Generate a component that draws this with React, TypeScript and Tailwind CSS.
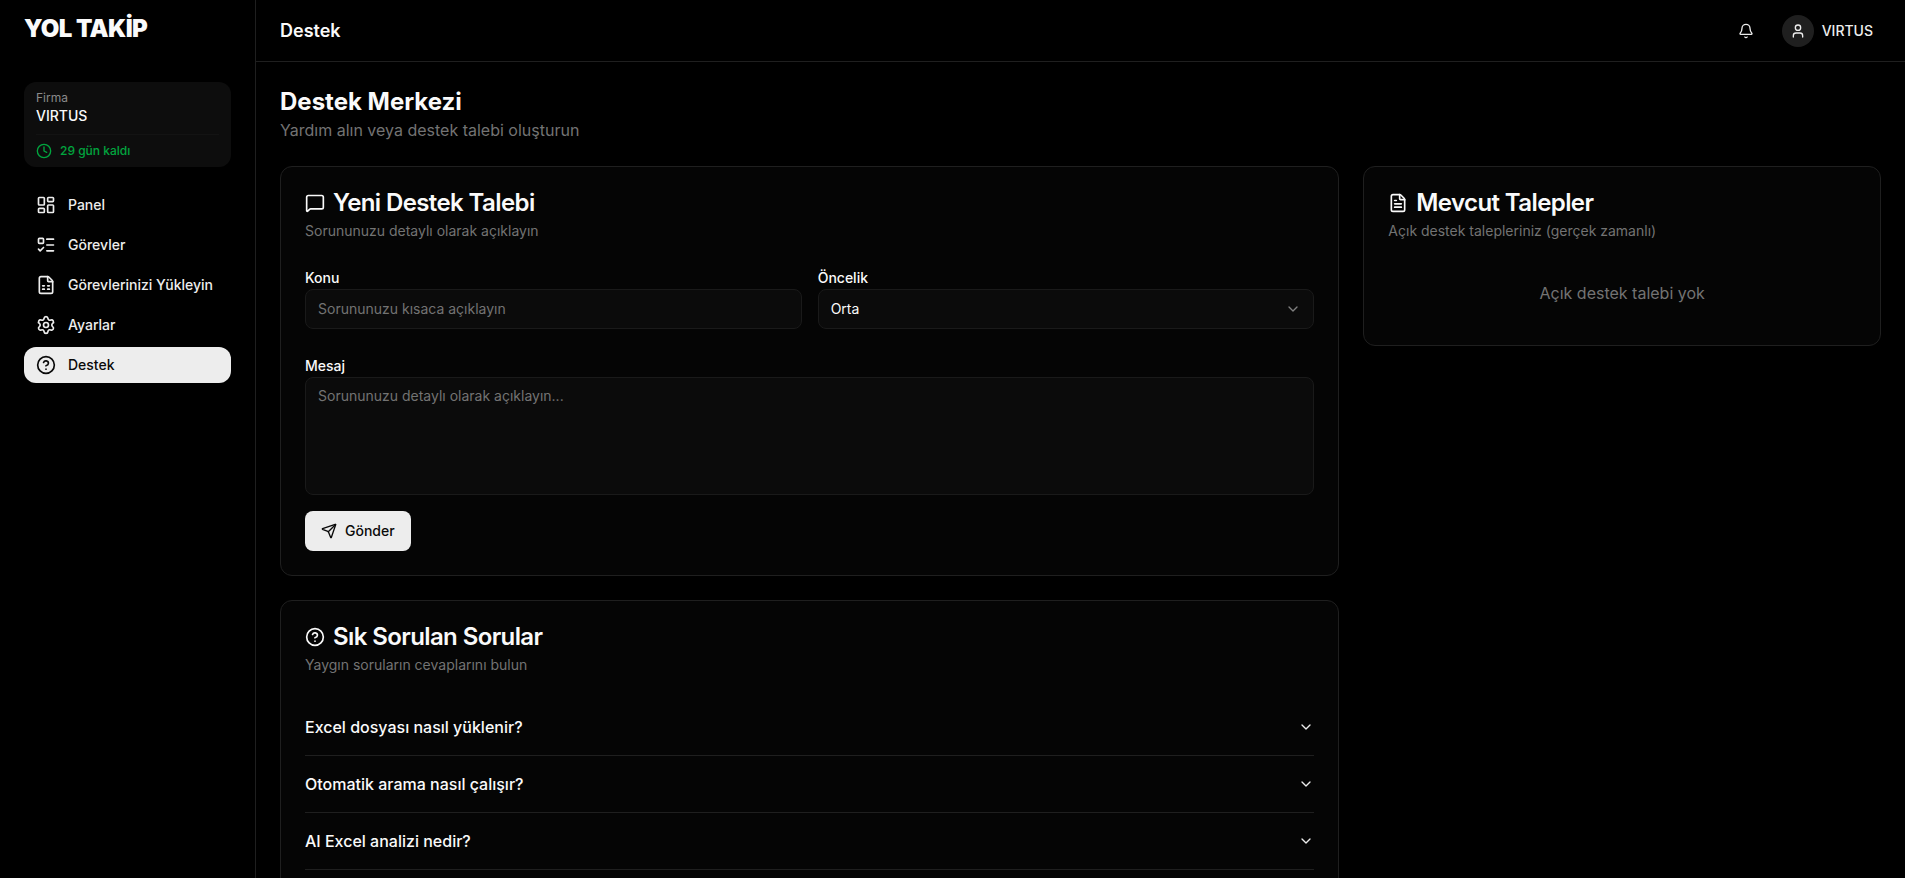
import { Bell, ChevronDown, CircleHelp, Clock, FileSpreadsheet, FileText, LayoutDashboard, ListTodo, MessageSquare, Send, Settings, User } from "lucide-react";

const navItems = [
  { label: "Panel", icon: LayoutDashboard },
  { label: "Görevler", icon: ListTodo },
  { label: "Görevlerinizi Yükleyin", icon: FileSpreadsheet },
  { label: "Ayarlar", icon: Settings },
  { label: "Destek", icon: CircleHelp, active: true },
];

const faqs = ["Excel dosyası nasıl yüklenir?", "Otomatik arama nasıl çalışır?", "AI Excel analizi nedir?"];

const Sidebar = () => {
  return (
    <aside className="flex h-full w-[256px] shrink-0 flex-col border-r border-[#1f1f1f] bg-black">
      {/* logo */}
      <div className="h-[62px] px-6 pt-[13px]">
        <span className="text-[24px] leading-8 font-black tracking-tight text-[#fafafa]">YOL TAKİP</span>
      </div>

      {/* firma */}
      <div className="mx-6 mt-5 rounded-xl bg-[#0d0d0d] px-3 pt-2 pb-2">
        <p className="text-xs leading-4 text-[#8a8a8a]">Firma</p>
        <p className="text-sm leading-5 font-medium text-[#fafafa]">VIRTUS</p>
        <div className="mt-2 flex items-center gap-2 border-t border-[#131313] pt-2">
          <Clock className="h-4 w-4 text-green-600" />
          <span className="text-xs leading-4 font-medium text-green-600">29 gün kaldı</span>
        </div>
      </div>

      {/* nav */}
      <nav className="mx-6 mt-5 flex flex-col gap-1">
        {navItems.map((item) => (
          <div
            key={item.label}
            className={`flex h-9 items-center gap-3 rounded-xl px-3 text-sm font-medium ${item.active ? "bg-[#ededed] text-[#0a0a0a]" : "text-[#ededed]"}`}
          >
            <item.icon className="h-5 w-5" />
            <span>{item.label}</span>
          </div>
        ))}
      </nav>
    </aside>
  );
};

const Header = () => {
  return (
    <header className="flex h-[62px] shrink-0 items-center justify-between border-b border-[#1f1f1f] bg-black pr-8 pl-6">
      <span className="text-lg leading-6 font-semibold text-[#fafafa]">Destek</span>
      <div className="flex items-center gap-[28px]">
        <Bell className="h-4 w-4 text-[#ededed]" />
        <div className="flex items-center gap-2">
          <div className="flex h-8 w-8 items-center justify-center rounded-full bg-[#1f1f1f]">
            <User className="h-4 w-4 text-[#ededed]" />
          </div>
          <span className="text-sm font-medium text-[#ededed]">VIRTUS</span>
        </div>
      </div>
    </header>
  );
};

const CardHead = ({ icon: Icon, title, sub }: { icon: typeof Send; title: string; sub: string }) => {
  return (
    <div>
      <div className="flex items-center gap-2">
        <Icon className="h-5 w-5 text-[#fafafa]" />
        <h3 className="text-2xl leading-none font-semibold tracking-tight text-[#fafafa]">{title}</h3>
      </div>
      <p className="mt-1.5 text-sm leading-5 text-[#737373]">{sub}</p>
    </div>
  );
};

export default function App() {
  return (
    <div className="flex h-screen w-full overflow-hidden bg-black font-['Inter',sans-serif]">
      <Sidebar />

      <div className="flex min-w-0 flex-1 flex-col">
        <Header />

        <main className="flex-1 overflow-hidden p-6">
          <h1 className="text-2xl leading-8 font-bold text-[#fafafa]">Destek Merkezi</h1>
          <p className="text-base leading-6 text-[#737373]">Yardım alın veya destek talebi oluşturun</p>

          <div className="mt-6 grid grid-cols-3 gap-6">
            <div className="col-span-2 flex flex-col gap-6">
              {/* new ticket */}
              <section className="rounded-xl border border-[#1f1f1f] bg-[#050505] p-6">
                <CardHead icon={MessageSquare} title="Yeni Destek Talebi" sub="Sorununuzu detaylı olarak açıklayın" />

                <div className="mt-[30px] grid grid-cols-2 gap-4">
                  <div>
                    <label className="block text-sm leading-none font-medium text-[#fafafa]">Konu</label>
                    <div className="mt-1 flex h-10 items-center rounded-lg border border-[#1a1a1a] bg-[#0b0b0b] px-3 text-sm text-[#737373]">
                      Sorununuzu kısaca açıklayın
                    </div>
                  </div>
                  <div>
                    <label className="block text-sm leading-none font-medium text-[#fafafa]">Öncelik</label>
                    <div className="mt-1 flex h-10 items-center justify-between rounded-lg border border-[#1a1a1a] bg-[#0b0b0b] px-3 text-sm text-[#fafafa]">
                      <span>Orta</span>
                      <ChevronDown className="h-4 w-4 text-[#808080]" />
                    </div>
                  </div>
                </div>

                <div className="mt-[30px]">
                  <label className="block text-sm leading-none font-medium text-[#fafafa]">Mesaj</label>
                  <div className="mt-1 h-[118px] rounded-lg border border-[#1a1a1a] bg-[#0b0b0b] px-3 py-2 text-sm leading-5 text-[#737373]">
                    Sorununuzu detaylı olarak açıklayın...
                  </div>
                </div>

                <button className="mt-4 flex h-10 items-center gap-2 rounded-lg bg-[#ededed] px-4 text-sm font-medium text-[#0a0a0a]">
                  <Send className="h-4 w-4" />
                  Gönder
                </button>
              </section>

              {/* faq */}
              <section className="rounded-xl border border-[#1f1f1f] bg-[#050505] p-6">
                <CardHead icon={CircleHelp} title="Sık Sorulan Sorular" sub="Yaygın soruların cevaplarını bulun" />
                <div className="mt-6">
                  {faqs.map((q) => (
                    <div key={q} className="flex h-[57px] items-center justify-between border-b border-[#1f1f1f] text-base font-medium text-[#fafafa]">
                      <span>{q}</span>
                      <ChevronDown className="h-4 w-4 text-[#ededed]" />
                    </div>
                  ))}
                </div>
              </section>
            </div>

            {/* tickets */}
            <div>
              <section className="rounded-xl border border-[#1f1f1f] bg-[#050505] p-6">
                <CardHead icon={FileText} title="Mevcut Talepler" sub="Açık destek talepleriniz (gerçek zamanlı)" />
                <p className="mt-10 mb-4 text-center text-base leading-6 text-[#737373]">Açık destek talebi yok</p>
              </section>
            </div>
          </div>
        </main>
      </div>
    </div>
  );
}
